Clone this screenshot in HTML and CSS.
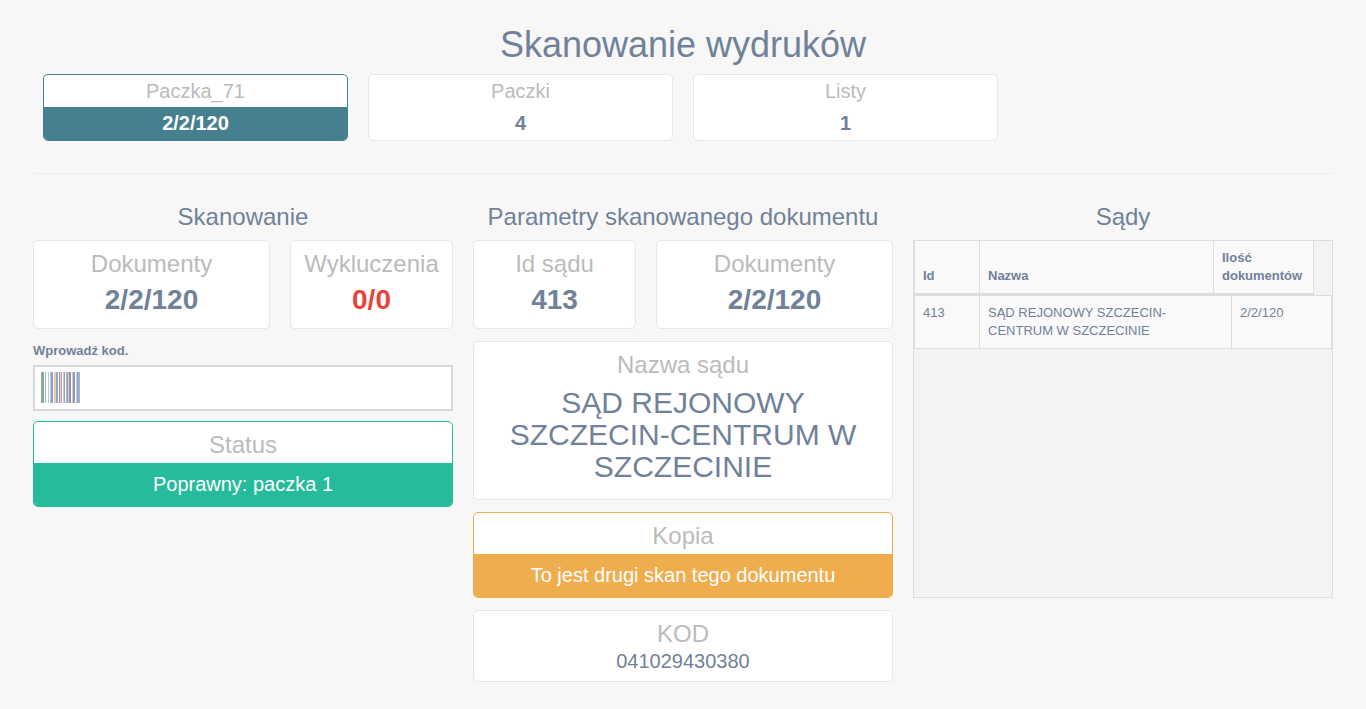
FILE: index.html
```html
<!DOCTYPE html>
<html lang="pl">
<head>
<meta charset="utf-8">
<title>Skanowanie wydruków</title>
<link rel="stylesheet" href="styles.css">
</head>
<body>
<div class="page">
  <h1 class="title">Skanowanie wydruków</h1>
  <div class="tops">
    <div class="top top-active"><div class="top-label">Paczka_71</div><div class="top-value">2/2/120</div></div>
    <div class="top"><div class="top-label">Paczki</div><div class="top-value">4</div></div>
    <div class="top"><div class="top-label">Listy</div><div class="top-value">1</div></div>
  </div>
  <hr class="rule">
  <div class="columns">
    <section class="col">
      <h2 class="col-title">Skanowanie</h2>
      <div class="row">
        <div class="card stat stat-wide"><div class="stat-label">Dokumenty</div><div class="stat-value">2/2/120</div></div>
        <div class="card stat stat-narrow"><div class="stat-label">Wykluczenia</div><div class="stat-value red">0/0</div></div>
      </div>
      <label class="field-label">Wprowadź kod.</label>
      <div class="input">
        <svg class="barcode" width="40" height="31" viewBox="0 0 40 31">
          <rect x="0" width="1" height="31" fill="#a8a878"/><rect x="1" width="2" height="31" fill="#78b0a8"/><rect x="4" width="1" height="31" fill="#a8b4c8"/>
          <rect x="7" width="1" height="31" fill="#c4c8d0"/><rect x="9" width="1" height="31" fill="#d0c4c4"/><rect x="10" width="2" height="31" fill="#7fa4d0"/>
          <rect x="13" width="2" height="31" fill="#f0cca4"/><rect x="15" width="2" height="31" fill="#94a8cc"/><rect x="18" width="1" height="31" fill="#9098c0"/>
          <rect x="19" width="1" height="31" fill="#ecccc0"/><rect x="20" width="1" height="31" fill="#b0a8c4"/><rect x="22" width="1" height="31" fill="#e8c8a8"/>
          <rect x="23" width="1" height="31" fill="#90a0c8"/><rect x="25" width="1" height="31" fill="#c8b0c0"/><rect x="26" width="1" height="31" fill="#88a0c8"/>
          <rect x="27" width="1" height="31" fill="#e8c8b0"/><rect x="28" width="2" height="31" fill="#8898b8"/><rect x="31" width="1" height="31" fill="#e8c8b0"/>
          <rect x="32" width="2" height="31" fill="#8898c0"/><rect x="35" width="1" height="31" fill="#e8c8a8"/><rect x="36" width="1" height="31" fill="#90a0c0"/>
          <rect x="37" width="2" height="31" fill="#90b8e0"/>
        </svg>
      </div>
      <div class="banner banner-green"><div class="banner-label">Status</div><div class="banner-value">Poprawny: paczka 1</div></div>
    </section>
    <section class="col">
      <h2 class="col-title">Parametry skanowanego dokumentu</h2>
      <div class="row">
        <div class="card stat stat-narrow2"><div class="stat-label">Id sądu</div><div class="stat-value">413</div></div>
        <div class="card stat stat-wide2"><div class="stat-label">Dokumenty</div><div class="stat-value">2/2/120</div></div>
      </div>
      <div class="card court"><div class="stat-label">Nazwa sądu</div><div class="court-name">SĄD REJONOWY SZCZECIN-CENTRUM W SZCZECINIE</div></div>
      <div class="banner banner-orange"><div class="banner-label">Kopia</div><div class="banner-value">To jest drugi skan tego dokumentu</div></div>
      <div class="card code"><div class="stat-label">KOD</div><div class="code-value">041029430380</div></div>
    </section>
    <section class="col">
      <h2 class="col-title">Sądy</h2>
      <div class="table-wrap">
        <table class="table table-head">
          <colgroup><col class="c-id"><col class="c-name-h"><col class="c-count-h"></colgroup>
          <tr><th>Id</th><th>Nazwa</th><th>Ilość dokumentów</th></tr>
        </table>
        <table class="table table-body">
          <colgroup><col class="c-id"><col class="c-name"><col class="c-count"></colgroup>
          <tr><td>413</td><td>SĄD REJONOWY SZCZECIN-CENTRUM W SZCZECINIE</td><td>2/2/120</td></tr>
        </table>
      </div>
    </section>
  </div>
</div>
</body>
</html>
```
FILE: styles.css
```css
* { box-sizing: border-box; }
html, body { margin: 0; padding: 0; }
body { background: #f7f7f7; font-family: "Liberation Sans", Arial, sans-serif; color: #708299; height: 709px; overflow: hidden; }
.page { width: 1300px; margin-left: 33px; padding-top: 24px; }
.title { margin: 0; font-size: 36px; line-height: 42px; font-weight: 400; text-align: center; color: #708299; height: 50px; }
.tops { display: flex; gap: 20px; padding-left: 10px; }
.top { width: 305px; height: 67px; background: #fff; border: 1px solid #e7e7e7; border-radius: 5px; overflow: hidden; text-align: center; }
.top-label { height: 32px; line-height: 32px; font-size: 20px; color: #bbb; }
.top-value { height: 33px; line-height: 33px; font-size: 20px; font-weight: 700; color: #708299; }
.top-active { border-color: #468090; }
.top-active .top-value { background: #468090; color: #fff; }
.rule { margin: 32px 0 0 0; border: 0; border-top: 1px solid #eee; height: 0; }
.columns { display: grid; grid-template-columns: repeat(3, 420px); gap: 20px; margin-top: 30px; }
.col-title { margin: 0; height: 36px; font-size: 24px; line-height: 26px; font-weight: 400; text-align: center; color: #708299; }
.row { display: flex; gap: 20px; }
.card { background: #fff; border: 1px solid #e7e7e7; border-radius: 5px; text-align: center; }
.stat { height: 89px; padding-top: 8px; }
.stat-wide { width: 237px; }
.stat-narrow { width: 163px; }
.stat-narrow2 { width: 163px; }
.stat-wide2 { width: 237px; }
.stat-label { font-size: 24px; line-height: 30px; color: #bbb; }
.stat-value { font-size: 28px; line-height: 42px; font-weight: 700; color: #708299; }
.red { color: #e8433c; }
.field-label { display: block; margin-top: 15px; font-size: 13px; line-height: 14px; font-weight: 700; color: #708299; }
.input { margin-top: 7px; height: 46px; background: #fff; border: 2px solid #d8d8d8; padding: 5px 6px; }
.barcode { display: block; }
.banner { border-radius: 5px; overflow: hidden; background: #fff; border: 1px solid; text-align: center; }
.banner-label { height: 41px; font-size: 24px; line-height: 45px; color: #bbb; }
.banner-value { color: #fff; font-size: 20px; }
.banner-green { margin-top: 10px; height: 86px; border-color: #25bb9b; }
.banner-green .banner-value { background: #25bb9b; line-height: 43px; height: 43px; }
.banner-orange { margin-top: 12px; height: 86px; border-color: #f0ad4e; }
.banner-orange .banner-value { background: #f0ad4e; line-height: 43px; height: 43px; }
.court { margin-top: 12px; height: 159px; padding: 8px 20px 0; }
.court-name { font-size: 30px; line-height: 32px; margin-top: 7px; color: #708299; }
.code { margin-top: 12px; height: 72px; padding-top: 8px; }
.code .stat-label { line-height: 30px; }
.code-value { font-size: 20px; line-height: 24px; color: #708299; }
.table-wrap { height: 358px; background: #f3f3f3; border: 1px solid #ddd; }
.table { border-collapse: collapse; table-layout: fixed; font-size: 13px; background: #f9f9f9; color: #708299; }
.table-head { width: 399px; }
.table-body { width: 417px; margin-top: 0; }
.c-id { width: 65px; }
.c-name-h { width: 234px; }
.c-count-h { width: 100px; }
.c-name { width: 252px; }
.c-count { width: 100px; }
.table th { height: 53px; text-align: left; vertical-align: bottom; padding: 8px; line-height: 18px; font-weight: 700; border: 1px solid #ddd; border-top: 0; border-bottom: 2px solid #ddd; }
.table td { height: 53px; vertical-align: top; padding: 8px; line-height: 18px; border: 1px solid #ddd; }
```
